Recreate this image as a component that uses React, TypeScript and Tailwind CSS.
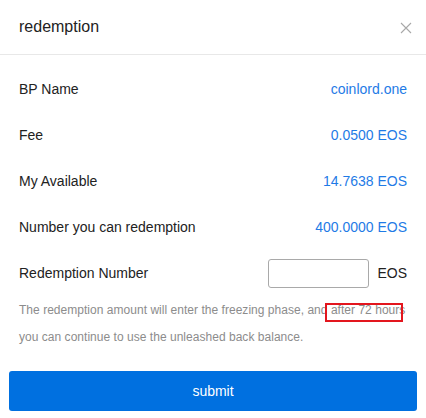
import React from "react";

const rows: [string, string][] = [
  ["BP Name", "coinlord.one"],
  ["Fee", "0.0500 EOS"],
  ["My Available", "14.7638 EOS"],
  ["Number you can redemption", "400.0000 EOS"],
];

export default function App() {
  return (
    <div
      className="relative w-[426px] h-[418px] bg-white text-[#333]"
      style={{ fontFamily: '"Liberation Sans", Arial, sans-serif' }}
    >
      <div className="h-[55px] flex items-center justify-between pl-[19px] pr-[14px] border-b border-[#e8e8e8]">
        <span className="text-[16px] text-[#222]">redemption</span>
        <svg width="12" height="12" viewBox="0 0 12 12" className="mt-[1px]">
          <path d="M1 1L11 11M11 1L1 11" stroke="#a8a8a8" strokeWidth="1.1" fill="none" />
        </svg>
      </div>
      <div className="pt-[11px] px-[19px]">
        {rows.map(([k, v]) => (
          <div key={k} className="h-[46px] flex items-center justify-between text-[14px]">
            <span className="text-[#222]">{k}</span>
            <span className="text-[#1f7be6]">{v}</span>
          </div>
        ))}
        <div className="h-[46px] flex items-center justify-between text-[14px]">
          <span className="text-[#222]">Redemption Number</span>
          <div className="flex items-center gap-[8px] pt-[1px]">
            <input className="w-[101px] h-[29px] border border-[#a9a9a9] rounded-[3px] outline-none" />
            <span className="text-[#222]">EOS</span>
          </div>
        </div>
        <div className="text-[12px] leading-[27px] text-[#8c8c8c] mt-[1px] tracking-[0.03px]">
          The redemption amount will enter the freezing phase, and after 72 hours you can continue to use the unleashed back balance.
        </div>
      </div>
      <div className="px-[9px] mt-[20px]">
        <button className="w-full h-[40px] rounded-[3px] bg-[#0070e0] text-white text-[14px]">
          submit
        </button>
      </div>
      <div className="absolute left-[325px] top-[303px] w-[78px] h-[19px] border-2 border-[#e3161e]" />
    </div>
  );
}
